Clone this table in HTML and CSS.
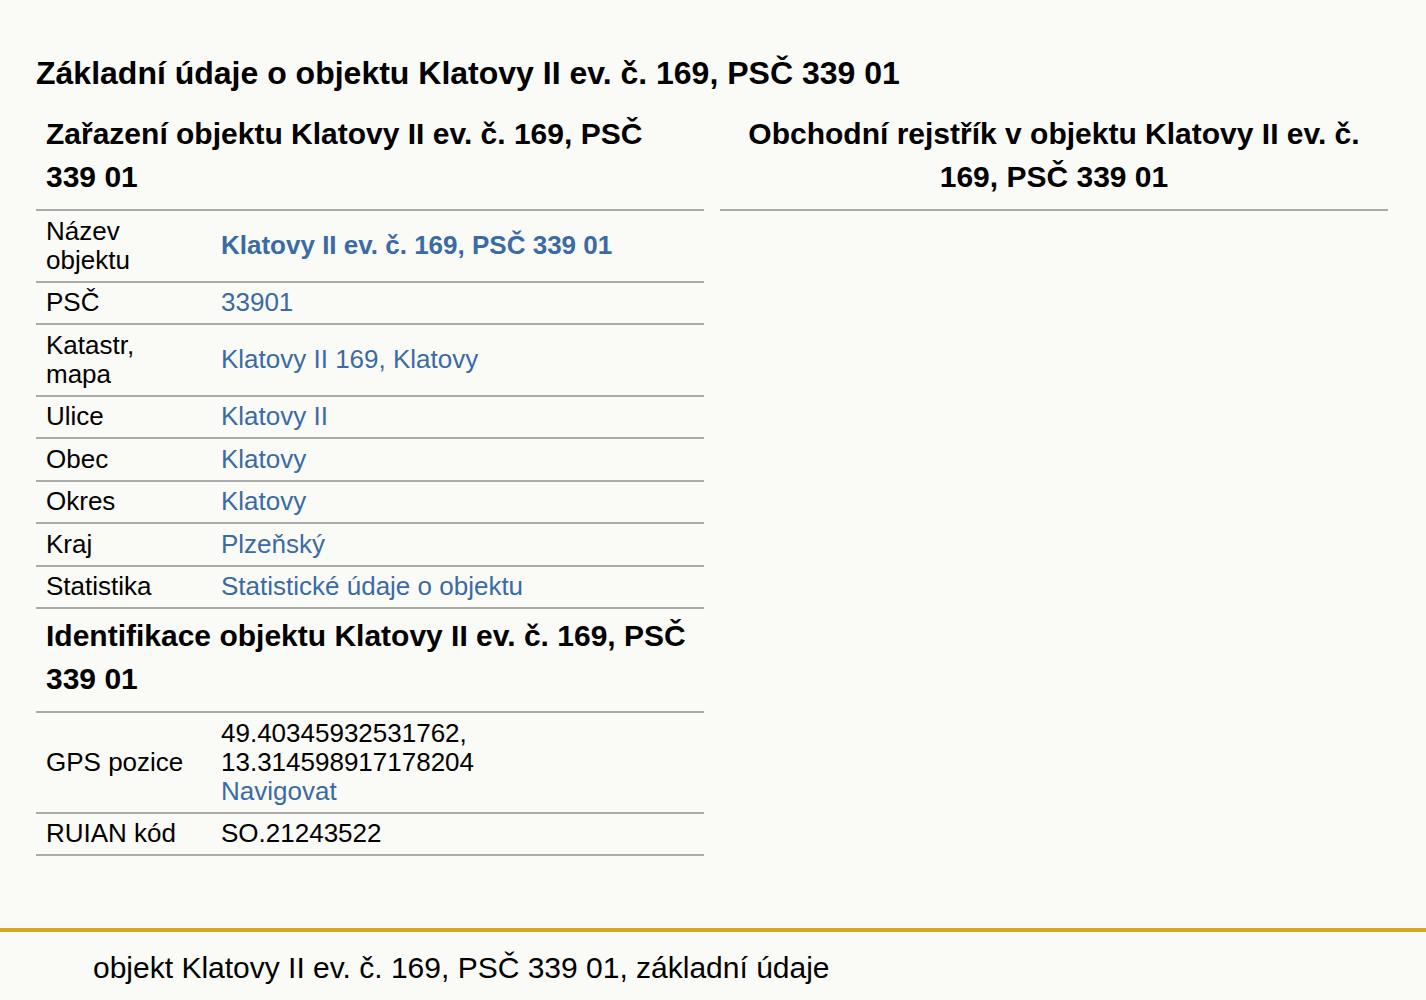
FILE: index.html
```html
<!DOCTYPE html>
<html lang="cs">
<head>
    <meta charset="UTF-8">
    <meta name="viewport" content="width=device-width, initial-scale=1.0">
    <title>Klatovy II ev. č. 169, PSČ 339 01</title>
    <link rel="stylesheet" href="styles.css">
</head>
<body>
    <div class="page">
        <h1 class="title">Základní údaje o objektu Klatovy II ev. č. 169, PSČ 339 01</h1>

        <div class="columns">
            <section class="col">
                <h2>Zařazení objektu Klatovy II ev. č. 169, PSČ 339 01</h2>
                <table class="info">
                    <tr>
                        <td class="label">Název objektu</td>
                        <td><a href="#" class="strong">Klatovy II ev. č. 169, PSČ 339 01</a></td>
                    </tr>
                    <tr>
                        <td class="label">PSČ</td>
                        <td><a href="#">33901</a></td>
                    </tr>
                    <tr>
                        <td class="label">Katastr, mapa</td>
                        <td><a href="#">Klatovy II 169, Klatovy</a></td>
                    </tr>
                    <tr>
                        <td class="label">Ulice</td>
                        <td><a href="#">Klatovy II</a></td>
                    </tr>
                    <tr>
                        <td class="label">Obec</td>
                        <td><a href="#">Klatovy</a></td>
                    </tr>
                    <tr>
                        <td class="label">Okres</td>
                        <td><a href="#">Klatovy</a></td>
                    </tr>
                    <tr>
                        <td class="label">Kraj</td>
                        <td><a href="#">Plzeňský</a></td>
                    </tr>
                    <tr>
                        <td class="label">Statistika</td>
                        <td><a href="#">Statistické údaje o objektu</a></td>
                    </tr>
                </table>

                <h2>Identifikace objektu Klatovy II ev. č. 169, PSČ 339 01</h2>
                <table class="info">
                    <tr>
                        <td class="label">GPS pozice</td>
                        <td>49.40345932531762, 13.314598917178204<br><a href="#">Navigovat</a></td>
                    </tr>
                    <tr>
                        <td class="label">RUIAN kód</td>
                        <td>SO.21243522</td>
                    </tr>
                </table>
            </section>

            <section class="col">
                <h2 class="center">Obchodní rejstřík v objektu Klatovy II ev. č. 169, PSČ 339 01</h2>
            </section>
        </div>
    </div>

    <footer class="footer">
        objekt Klatovy II ev. č. 169, PSČ 339 01, základní údaje
    </footer>
</body>
</html>
```

FILE: styles.css
```css
body {
    margin: 0;
    font-family: "Liberation Sans", Arial, sans-serif;
    background-color: #fafaf7;
    color: #000;
}
a {
    color: #3a6ba5;
    text-decoration: none;
}
a.strong {
    font-weight: bold;
}
.page {
    padding: 55px 38px 0 36px;
}
.title {
    margin: 0 0 16px;
    font-size: 32px;
    line-height: 36px;
    font-weight: bold;
}
.columns {
    display: grid;
    grid-template-columns: 1fr 1fr;
    gap: 16px;
    align-items: start;
}
h2 {
    margin: 0;
    padding: 5px 10px 11px;
    font-size: 30px;
    line-height: 43px;
    font-weight: bold;
    border-bottom: 2px solid #aaa;
}
h2.center {
    text-align: center;
}
.info {
    width: 100%;
    border-collapse: collapse;
    font-size: 26px;
    line-height: 29px;
}
.info td {
    padding: 5.75px 10px;
    border-bottom: 2px solid #aaa;
    vertical-align: middle;
}
.info td.label {
    width: 155px;
}
.footer {
    margin-top: 72px;
    border-top: 4px solid #daa520;
    padding: 19px 93px 20px;
    font-size: 30px;
    line-height: 34px;
}
```
